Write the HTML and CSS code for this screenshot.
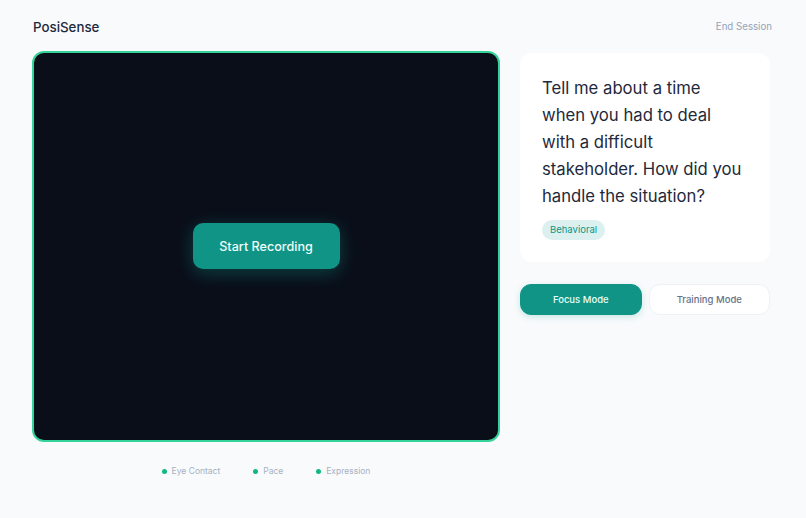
FILE: index.html
```html
<!DOCTYPE html>
<html lang="en">
<head>
    <meta charset="UTF-8">
    <meta name="viewport" content="width=device-width, initial-scale=1.0">
    <title>PosiSense</title>
    <link rel="stylesheet" href="styles.css">
</head>
<body>
    <header class="topbar">
        <div class="brand">PosiSense</div>
        <a class="end-session" href="#">End Session</a>
    </header>

    <main class="session">
        <section class="stage">
            <div class="video">
                <button class="record-btn">Start Recording</button>
            </div>
            <ul class="legend">
                <li><span class="dot"></span>Eye Contact</li>
                <li><span class="dot"></span>Pace</li>
                <li><span class="dot"></span>Expression</li>
            </ul>
        </section>

        <aside class="side">
            <div class="question-card">
                <p class="question">Tell me about a time when you had to deal with a difficult stakeholder. How did you handle the situation?</p>
                <span class="tag">Behavioral</span>
            </div>
            <div class="modes">
                <button class="mode active">Focus Mode</button>
                <button class="mode">Training Mode</button>
            </div>
        </aside>
    </main>
</body>
</html>
```

FILE: styles.css
```css
body {
    margin: 0;
    background-color: #f8fafc;
    font-family: Inter, "Noto Sans", sans-serif;
    color: #1e293b;
}
.topbar {
    display: flex;
    justify-content: space-between;
    align-items: center;
    height: 52px;
    padding: 0 34px 0 33px;
}
.brand {
    font-size: 13.3px;
    font-weight: 500;
    color: #1e293b;
    margin-top: 1px;
}
.end-session {
    font-size: 9.7px;
    color: #94a3b8;
    text-decoration: none;
}
.session {
    display: grid;
    grid-template-columns: 468px 250px;
    gap: 20px;
    padding-left: 32px;
}
.video {
    height: 387px;
    border: 2px solid #34d399;
    border-radius: 12px;
    background-color: #0a0e19;
    display: flex;
    align-items: center;
    justify-content: center;
    margin-top: -1px;
}
.record-btn {
    width: 147px;
    height: 46px;
    border: none;
    border-radius: 10px;
    background-color: #0f9486;
    color: #f0fdfa;
    font-family: inherit;
    font-size: 12.6px;
    font-weight: 500;
    box-shadow: 0 4px 18px rgba(20, 184, 166, 0.3);
    margin-top: -1px;
}
.legend {
    display: flex;
    justify-content: center;
    gap: 33px;
    list-style: none;
    margin: 24px 0 0;
    padding: 0;
    font-size: 8.5px;
    color: #a7b1c2;
}
.legend li {
    display: flex;
    align-items: center;
}
.dot {
    width: 5px;
    height: 5px;
    border-radius: 50%;
    background-color: #10b981;
    margin-right: 5px;
}
.side {
    padding-top: 1px;
}
.question-card {
    background-color: #fff;
    border-radius: 12px;
    padding: 22px;
    height: 165px;
}
.question {
    margin: 0 0 10px;
    font-size: 16.7px;
    line-height: 27px;
    color: #1e293b;
}
.tag {
    display: block;
    width: fit-content;
    padding: 4px 8px;
    border-radius: 10px;
    background-color: #dcf1ef;
    color: #0f9486;
    font-size: 9.5px;
    line-height: 12px;
}
.modes {
    display: flex;
    gap: 7px;
    margin-top: 22px;
}
.mode {
    flex: 1;
    height: 31px;
    border: 1px solid #eef2f6;
    border-radius: 11px;
    background-color: #fff;
    color: #64748b;
    font-family: inherit;
    font-size: 9.5px;
    font-weight: 500;
}
.mode.active {
    background-color: #0f9486;
    border-color: #0f9486;
    color: #e6fffa;
    box-shadow: 0 2px 6px rgba(15, 148, 134, 0.2);
}
```
